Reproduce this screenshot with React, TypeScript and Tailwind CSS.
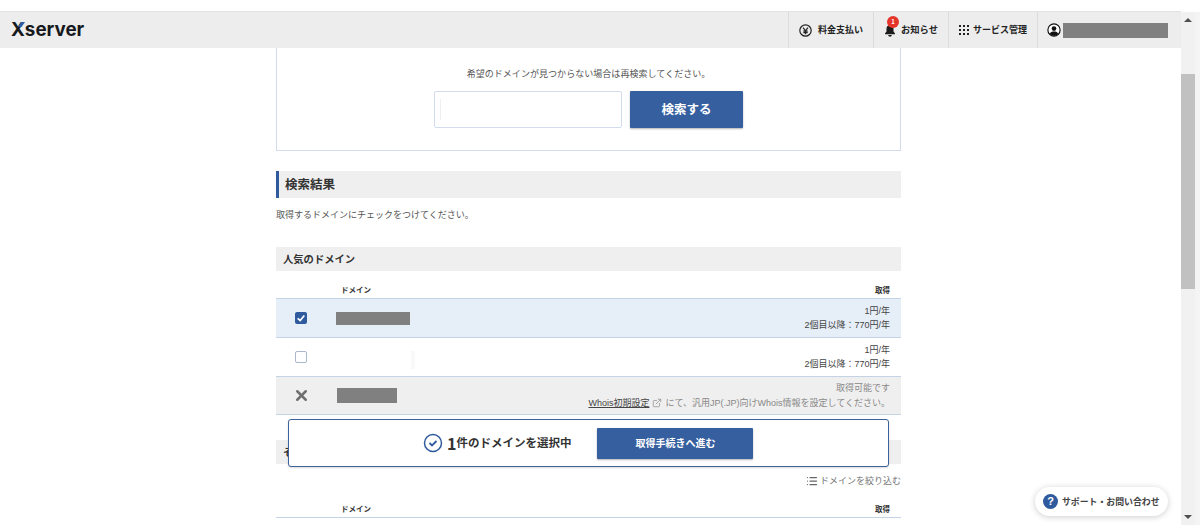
import React from "react";
import { ExternalLink, List, X } from "lucide-react";

const font = { fontFamily: '"Noto Sans CJK JP", "Liberation Sans", sans-serif' };
const latinFont = { fontFamily: '"Liberation Sans", "Noto Sans CJK JP", sans-serif' };

const Yen = () => (
  <svg width="13" height="13" viewBox="0 0 24 24" fill="none" stroke="#222" strokeWidth="2.2">
    <circle cx="12" cy="12" r="10.5" />
    <path d="M7.5 6.5 12 12.5 16.5 6.5M12 12.5V19M8 13h8M8 16h8" />
  </svg>
);

const Bell = () => (
  <svg width="12" height="14" viewBox="0 0 24 28" fill="#1b1b1b">
    <path d="M12 2c-1.2 0-2 .8-2 2v.7C6.500 5.700 5 8.500 5 12v5l-3 4v1.500h20V21l-3-4v-5c0-3.500-1.500-6.300-5-7.300V4c0-1.200-.8-2-2-2z" />
    <path d="M8.500 24h7c0 2-1.500 3.500-3.500 3.500S8.500 26 8.500 24z" />
  </svg>
);

const Grid = () => (
  <div className="grid grid-cols-3 gap-[2px]">
    {[0, 1, 2, 3, 4, 5, 6, 7, 8].map((i) => (
      <span key={i} className="w-[2px] h-[2px] bg-[#222]" />
    ))}
  </div>
);

const User = () => (
  <svg width="14" height="14" viewBox="0 0 24 24">
    <circle cx="12" cy="12" r="10.500" fill="#fff" stroke="#111" strokeWidth="2" />
    <circle cx="12" cy="9.500" r="4" fill="#111" />
    <path d="M4.500 19c1.500-3.500 4-4.500 7.500-4.500s6 1 7.500 4.500c-2 2-4.500 3-7.500 3s-5.500-1-7.500-3z" fill="#111" />
  </svg>
);

const Header = () => (
  <div className="h-[36px] bg-[#ededed] flex items-center justify-between shrink-0">
    <div className="relative ml-[11px] text-[18.800px] font-bold text-[#17191c] leading-none" style={{ fontFamily: "Inter, sans-serif" }}>
      Xserver
      <svg className="absolute left-[7px] top-[1px]" width="7" height="5" viewBox="0 0 7 5">
        <polygon points="3,0 7,0 3.500,5 0,5" fill="#2f5ea8" />
      </svg>
    </div>
    <div className="flex h-full text-[9px] font-bold text-[#222]">
      <div className="flex items-center gap-[6px] w-[85px] pl-[10px] border-l border-[#dcdcdc]">
        <Yen />
        <span>料金支払い</span>
      </div>
      <div className="flex items-center gap-[5px] w-[75px] pl-[10px] border-l border-[#dcdcdc]">
        <div className="relative">
          <Bell />
          <span className="absolute -top-[7px] left-[3px] w-[12px] h-[12px] rounded-full bg-[#e5352b] text-white text-[6px] leading-[12px] text-center">1</span>
        </div>
        <span className="text-[9.300px]">お知らせ</span>
      </div>
      <div className="flex items-center gap-[4px] w-[89px] pl-[10px] border-l border-[#dcdcdc]">
        <Grid />
        <span>サービス管理</span>
      </div>
      <div className="flex items-center gap-[2px] w-[144px] pl-[9px] border-l border-[#dcdcdc]">
        <User />
        <span className="w-[105px] h-[15px] bg-[#808080]" />
      </div>
    </div>
  </div>
);

const SectionTitle = ({ children, className = "" }: { children: React.ReactNode; className?: string }) => (
  <div className={`h-[24px] bg-[#efefef] pl-[7px] flex items-center text-[10.300px] font-bold text-[#333] ${className}`}>
    {children}
  </div>
);

const TableHead = ({ className = "" }: { className?: string }) => (
  <div className={`flex justify-between items-end pb-[3px] pl-[65px] pr-[11px] border-b border-[#c5d3e6] text-[7.500px] font-bold text-[#333] ${className}`}>
    <span>ドメイン</span>
    <span>取得</span>
  </div>
);

const Price = () => (
  <div className="text-right text-[9px] leading-[14px] text-[#444]" style={latinFont}>
    <div>1円/年</div>
    <div>2個目以降：770円/年</div>
  </div>
);

export default function App() {
  return (
    <div className="relative w-[1200px] h-[525px] overflow-hidden bg-white pt-[12px] flex" style={font}>
      <div className="relative flex-1 min-w-0 flex flex-col">
        <div className="absolute -top-px left-0 right-0 h-px bg-[#e3e3e3]" />
        <Header />
        <div className="w-[625px] ml-[276px] flex flex-col">
          {/* search box */}
          <div className="h-[103px] border-x border-b border-[#d3dcec] flex flex-col items-center">
            <div className="mt-[18px] text-[9.050px] leading-[16px] text-[#555]">
              希望のドメインが見つからない場合は再検索してください。
            </div>
            <div className="mt-[9px] flex gap-[8px]">
              <div className="w-[188px] h-[37px] bg-white border border-[#d3dcec] rounded-[2px] pl-[5px] py-[7px]">
                <div className="w-[60px] h-full border-l border-[#efefef]" />
              </div>
              <div className="w-[113px] h-[37px] bg-[#365f9f] rounded-[1px] shadow-[0_1px_2px_rgba(0,0,0,0.3)] text-white text-[12.500px] font-bold flex items-center justify-center">
                検索する
              </div>
            </div>
          </div>

          <div className="mt-[20px] h-[27px] bg-[#efefef] border-l-[3px] border-[#2f5a9e] pl-[6px] flex items-center text-[12.500px] font-bold text-[#333]">
            検索結果
          </div>
          <div className="mt-[9px] text-[9px] leading-[16px] text-[#555]">
            取得するドメインにチェックをつけてください。
          </div>

          <SectionTitle className="mt-[24px]">人気のドメイン</SectionTitle>
          <TableHead className="h-[28px]" />

          <div className="h-[39px] bg-[#e6eef8] border-b border-[#c5d3e6] flex items-center justify-between pr-[11px]">
            <div className="flex items-center">
              <span className="ml-[19px] w-[12px] h-[12px] rounded-[2px] bg-[#2f5a9e] flex items-center justify-center">
                <svg width="10" height="10" viewBox="0 0 12 12" fill="none" stroke="#fff" strokeWidth="2">
                  <path d="M2 6.500 5 9l5-6" />
                </svg>
              </span>
              <span className="ml-[29px] w-[74px] h-[13px] bg-[#808080]" />
            </div>
            <Price />
          </div>

          <div className="h-[39px] bg-white border-b border-[#c5d3e6] flex items-center justify-end pr-[11px] relative">
            <span className="absolute left-[19px] top-[13px] w-[12px] h-[12px] rounded-[2px] bg-white border border-[#a9b6cc]" />
            <span className="absolute left-[135px] top-[13px] w-[4px] h-[18px] bg-[#f9f9f9]" />
            <Price />
          </div>

          <div className="h-[38px] bg-[#efefef] border-b border-[#c5d3e6] flex items-center justify-between pr-[11px]">
            <div className="flex items-center">
              <X size={17} strokeWidth={3.500} color="#6f6f6f" className="ml-[17px]" />
              <span className="ml-[27px] w-[60px] h-[15px] bg-[#808080]" />
            </div>
            <div className="text-right text-[9px] leading-[14.500px] text-[#888]" style={latinFont}>
              <div>取得可能です</div>
              <div className="flex items-center justify-end gap-[3px]">
                <span className="underline text-[#444]">Whois初期設定</span>
                <ExternalLink size={10} color="#999" />
                <span>にて、汎用JP(.JP)向けWhois情報を設定してください。</span>
              </div>
            </div>
          </div>

          <SectionTitle className="mt-[25px]">その他のドメイン</SectionTitle>
          <div className="mt-[9px] flex items-center justify-end gap-[2px] text-[9px] leading-[16px] text-[#777]">
            <List size={12} color="#666" strokeWidth={2.500} />
            <span>ドメインを絞り込む</span>
          </div>
          <TableHead className="mt-[7px] h-[22px]" />
        </div>

        {/* selection bar */}
        <div className="absolute left-[288px] top-[407px] w-[601px] h-[48px] bg-white border border-[#3d6299] rounded-[3px] flex items-center shadow-[0_1px_2px_rgba(0,0,0,0.15)]">
          <svg className="ml-[134px]" width="20" height="20" viewBox="0 0 20 20" fill="none" stroke="#2f5a9e" strokeWidth="1.500">
            <circle cx="10" cy="10" r="8.500" />
            <path d="M6.500 10 9 12.500 13.500 8" strokeWidth="1.800" />
          </svg>
          <span className="ml-[4px] text-[16px] font-bold text-[#333] leading-none">1</span>
          <span className="text-[11.500px] font-bold text-[#333]">件のドメインを選択中</span>
          <div className="ml-[26px] w-[156px] h-[31px] pb-[2px] bg-[#365f9f] rounded-[1px] shadow-[0_1px_2px_rgba(0,0,0,0.3)] text-white text-[10px] font-bold flex items-center justify-center">
            取得手続きへ進む
          </div>
        </div>

        {/* support */}
        <div className="absolute right-[13px] bottom-[9px] w-[133px] h-[29px] rounded-full bg-white shadow-[0_1px_6px_rgba(0,0,0,0.2)] flex items-center pl-[8px] gap-[4px]">
          <span className="w-[15px] h-[15px] rounded-full bg-[#2f5a9e] text-white text-[11px] font-bold leading-[15px] text-center" style={latinFont}>?</span>
          <span className="text-[8.900px] font-bold text-[#444]">サポート・お問い合わせ</span>
        </div>
      </div>

      {/* scrollbar */}
      <div className="w-[19px] bg-[#f4f4f4] shrink-0">
        <div className="w-[14px] h-full bg-[#f1f1f1] flex flex-col items-center">
          <span className="mt-[6px] w-0 h-0 border-x-[4px] border-x-transparent border-b-[4px] border-b-[#505050]" />
          <div className="mt-[52px] w-full h-[215px] bg-[#c1c1c1]" />
          <span className="mt-auto mb-[6px] w-0 h-0 border-x-[4px] border-x-transparent border-t-[4px] border-t-[#505050]" />
        </div>
      </div>
    </div>
  );
}
